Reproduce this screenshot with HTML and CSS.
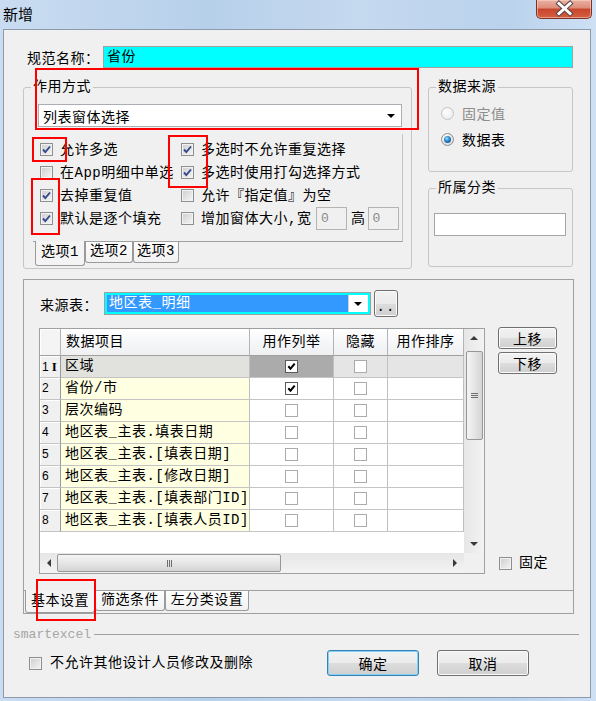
FILE: index.html
```html
<!DOCTYPE html>
<html lang="zh-CN">
<head>
  <meta charset="UTF-8">
  <title>新增</title>
  <link rel="stylesheet" href="styles.css">
</head>
<body>
<div class="window">

  <div class="titlebar">
    <span class="title">新增</span>
    <span class="close">
      <svg width="56" height="18" viewBox="0 0 56 18">
        <path d="M23 3.5L34 13.5M34 3.5L23 13.5" stroke="#5a4848" stroke-width="5" stroke-linecap="square"/>
        <path d="M23 3.5L34 13.5M34 3.5L23 13.5" stroke="#fff" stroke-width="3" stroke-linecap="square"/>
      </svg>
    </span>
  </div>

  <div class="client">

    <div class="name-row">
      <span class="name-label">规范名称：</span>
      <div class="name-input">省份</div>
    </div>

    <div class="top">
      <div class="group mode">
        <div class="group-title">作用方式</div>
        <div class="combo">列表窗体选择<span class="arrow"></span></div>

        <div class="opt-page">
          <div class="checks">
            <div class="chk"><span class="cb"><svg viewBox="0 0 11 11"><path d="M2 5.5l2.3 2.6L9 2.5"/></svg></span>允许多选</div>
            <div class="chk"><span class="cb"><svg viewBox="0 0 11 11"><path d="M2 5.5l2.3 2.6L9 2.5"/></svg></span>多选时不允许重复选择</div>
            <div class="chk"><span class="cb"></span>在App明细中单选</div>
            <div class="chk"><span class="cb"><svg viewBox="0 0 11 11"><path d="M2 5.5l2.3 2.6L9 2.5"/></svg></span>多选时使用打勾选择方式</div>
            <div class="chk"><span class="cb"><svg viewBox="0 0 11 11"><path d="M2 5.5l2.3 2.6L9 2.5"/></svg></span>去掉重复值</div>
            <div class="chk"><span class="cb"></span>允许『指定值』为空</div>
            <div class="chk"><span class="cb"><svg viewBox="0 0 11 11"><path d="M2 5.5l2.3 2.6L9 2.5"/></svg></span>默认是逐个填充</div>
            <div class="chk">
              <span class="cb"></span><span class="size-label">增加窗体大小,宽</span>
              <span class="num">0</span><span class="high">高</span><span class="num">0</span>
            </div>
          </div>
        </div>
        <div class="tabs small">
          <span class="tab active t1">选项1</span>
          <span class="tab t2">选项2</span>
          <span class="tab t3">选项3</span>
        </div>
      </div>

      <div class="side">
        <div class="group source">
          <div class="group-title">数据来源</div>
          <div class="radios">
            <div class="radio disabled"><span class="rb off"></span>固定值</div>
            <div class="radio"><span class="rb on"></span>数据表</div>
          </div>
        </div>
        <div class="group category">
          <div class="group-title">所属分类</div>
          <div class="cat-input"></div>
        </div>
      </div>
    </div>

    <div class="panel">
      <div class="page">
        <div class="src-row">
          <span class="src-label">来源表：</span>
          <div class="src-combo">
            <span class="src-val">地区表_明细</span>
            <span class="src-btn"><span class="arrow"></span></span>
          </div>
          <span class="btn dots">..</span>
        </div>

        <div class="grid-row">
          <div class="grid">
            <div class="view">
              <div class="tr head">
                <div class="c ind"></div>
                <div class="c item">数据项目</div>
                <div class="c list">用作列举</div>
                <div class="c hide">隐藏</div>
                <div class="c sort">用作排序</div>
              </div>
              <div class="tr cur">
                <div class="c ind">1<span class="ibeam">I</span></div>
                <div class="c item">区域</div>
                <div class="c list"><span class="gcb on"><svg viewBox="0 0 11 11"><path d="M2.3 5.3l2.2 2.4 4.2-5"/></svg></span></div>
                <div class="c hide"><span class="gcb"></span></div>
                <div class="c sort"></div>
              </div>
              <div class="tr">
                <div class="c ind">2</div>
                <div class="c item">省份/市</div>
                <div class="c list"><span class="gcb on"><svg viewBox="0 0 11 11"><path d="M2.3 5.3l2.2 2.4 4.2-5"/></svg></span></div>
                <div class="c hide"><span class="gcb"></span></div>
                <div class="c sort"></div>
              </div>
              <div class="tr">
                <div class="c ind">3</div>
                <div class="c item">层次编码</div>
                <div class="c list"><span class="gcb"></span></div>
                <div class="c hide"><span class="gcb"></span></div>
                <div class="c sort"></div>
              </div>
              <div class="tr">
                <div class="c ind">4</div>
                <div class="c item">地区表_主表.填表日期</div>
                <div class="c list"><span class="gcb"></span></div>
                <div class="c hide"><span class="gcb"></span></div>
                <div class="c sort"></div>
              </div>
              <div class="tr">
                <div class="c ind">5</div>
                <div class="c item">地区表_主表.[填表日期]</div>
                <div class="c list"><span class="gcb"></span></div>
                <div class="c hide"><span class="gcb"></span></div>
                <div class="c sort"></div>
              </div>
              <div class="tr">
                <div class="c ind">6</div>
                <div class="c item">地区表_主表.[修改日期]</div>
                <div class="c list"><span class="gcb"></span></div>
                <div class="c hide"><span class="gcb"></span></div>
                <div class="c sort"></div>
              </div>
              <div class="tr">
                <div class="c ind">7</div>
                <div class="c item">地区表_主表.[填表部门ID]</div>
                <div class="c list"><span class="gcb"></span></div>
                <div class="c hide"><span class="gcb"></span></div>
                <div class="c sort"></div>
              </div>
              <div class="tr">
                <div class="c ind">8</div>
                <div class="c item">地区表_主表.[填表人员ID]</div>
                <div class="c list"><span class="gcb"></span></div>
                <div class="c hide"><span class="gcb"></span></div>
                <div class="c sort"></div>
              </div>
            </div>

            <div class="vscroll">
              <span class="sarrow up"></span>
              <span class="vthumb"><span class="grip-h"></span></span>
              <span class="sarrow down"></span>
            </div>
            <div class="hscroll">
              <span class="sarrow left"></span>
              <span class="hthumb"><span class="grip-v"></span></span>
              <span class="sarrow right"></span>
            </div>
            <div class="corner"></div>
          </div>

          <div class="grid-side">
            <span class="btn move">上移</span>
            <span class="btn move down-btn">下移</span>
            <div class="chk fix"><span class="cb"></span>固定</div>
          </div>
        </div>
      </div>
      <div class="tabs big">
        <span class="tab active b1">基本设置</span>
        <span class="tab b2">筛选条件</span>
        <span class="tab b3">左分类设置</span>
      </div>
    </div>

    <div class="sep"><span class="sep-text">smartexcel</span><span class="sep-line"></span></div>

    <div class="footer">
      <div class="chk"><span class="cb"></span>不允许其他设计人员修改及删除</div>
      <div class="footer-buttons">
        <span class="btn big-btn default">确定</span>
        <span class="btn big-btn">取消</span>
      </div>
    </div>
  </div>

  <!-- red annotation boxes -->
  <div class="mark m1"></div>
  <div class="mark m2"></div>
  <div class="mark m3"></div>
  <div class="mark m4"></div>
  <div class="mark m5"></div>
</div>
</body>
</html>
```

FILE: styles.css
```css
* {
  box-sizing: border-box;
}

body {
  margin: 0;
  font-family: "Liberation Mono", "Noto Sans CJK SC", monospace;
  font-size: 14px;
  letter-spacing: 0.5px;
  color: #000;
  background: #c3d8ef;
}

.window {
  position: relative;
  width: 596px;
  height: 701px;
  overflow: hidden;
  background: linear-gradient(90deg, #c9dcf1 0%, #b7d0ea 35%, #c5d9ef 60%, #bad2ec 85%, #cde0f4 100%);
}

/* title bar */
.titlebar {
  display: flex;
  height: 29px;
}

.title {
  margin: 5px 0 0 3px;
  font-family: "Noto Sans CJK SC", sans-serif;
  font-size: 15px;
  line-height: 18px;
  letter-spacing: 0;
}

.close {
  margin-left: auto;
  margin-right: 4px;
  width: 56px;
  height: 19px;
  border: 1px solid #7a3326;
  border-top: none;
  border-radius: 0 0 5px 5px;
  background: linear-gradient(#eab1a3 0%, #dd8c79 45%, #c8452d 50%, #d4603f 100%);
  box-shadow: inset 0 0 0 1px rgba(255, 220, 210, 0.5);
}

.close svg {
  display: block;
  margin: 0 -1px;
}

/* client area */
.client {
  margin: 0 5px 0 3px;
  height: 669px;
  border: 1px solid #8c9aab;
  background: #f0f0f0;
}

.name-row {
  display: flex;
  align-items: center;
  height: 22px;
  margin-top: 16px;
  padding-left: 23px;
}

.name-label {
  width: 76px;
}

.name-input {
  width: 470px;
  height: 22px;
  padding-left: 3px;
  line-height: 20px;
  background: #00ffff;
  border: 1px solid #a0a0a0;
}

.top {
  display: flex;
  margin-top: 19px;
  padding-left: 19px;
}

.group {
  border: 1px solid #c6c6c6;
  border-radius: 3px;
}

.group-title {
  width: fit-content;
  height: 17px;
  margin: -9px 0 0 7px;
  padding: 0 2px;
  line-height: 17px;
  background: #f0f0f0;
}

.mode {
  width: 389px;
  height: 182px;
}

.combo {
  display: flex;
  align-items: center;
  width: 364px;
  height: 23px;
  margin: 8px 0 0 14px;
  padding-left: 4px;
  background: #fff;
  border: 1px solid #abadb3;
}

.arrow {
  margin-left: auto;
  margin-right: 6px;
  border-left: 4px solid transparent;
  border-right: 4px solid transparent;
  border-top: 4px solid #000;
}

.opt-page {
  width: 370px;
  height: 108px;
  margin: 7px 0 0 9px;
  padding-top: 4px;
  border-right: 1px solid #c4c4c4;
  border-bottom: 1px solid #a0a0a0;
}

.checks {
  display: grid;
  grid-template-columns: 141px auto;
  grid-auto-rows: 23px;
  padding-left: 7px;
}

.chk {
  display: flex;
  align-items: center;
  white-space: nowrap;
  line-height: 18px;
}

.cb {
  flex: none;
  width: 13px;
  height: 13px;
  margin-right: 7px;
  border: 1px solid #8e8f8f;
  background: linear-gradient(135deg, #cdcdcd, #f6f6f6);
  box-shadow: inset 0 0 0 1px #f2f2f2;
}

.cb svg {
  display: block;
  width: 11px;
  height: 11px;
  fill: none;
  stroke: #34488e;
  stroke-width: 1.9;
}

.size-label {
  width: 115px;
}

.num {
  width: 31px;
  height: 23px;
  padding-left: 4px;
  line-height: 21px;
  color: #8a8a8a;
  font-size: 13px;
  background: #f0f0f0;
  border: 1px solid #b4b4b4;
}

.high {
  margin: 0 2px 0 4px;
}

/* tabs */
.tabs {
  display: flex;
  padding-left: 2px;
}

.tab {
  height: 21px;
  line-height: 19px;
  text-align: center;
  background: linear-gradient(#fdfdfd, #f1f1f1);
  border: 1px solid #9a9a9a;
  border-top: none;
  border-radius: 0 0 3px 3px;
}

.tab.active {
  height: 25px;
  margin-top: -1px;
  background: #f4f4f4;
  line-height: 23px;
}

.t1 { width: 50px; }
.t2 { width: 48px; }
.t3 { width: 46px; }

.small {
  margin-left: 9px;
}

/* right side groups */
.side {
  margin-left: 16px;
  width: 145px;
}

.source {
  height: 85px;
}

.radios {
  display: flex;
  flex-direction: column;
  gap: 4px;
  margin: 6px 0 0 12px;
}

.radio {
  display: flex;
  align-items: center;
  height: 22px;
}

.radio.disabled {
  color: #8d8d8d;
}

.rb {
  display: flex;
  align-items: center;
  justify-content: center;
  width: 13px;
  height: 13px;
  margin-right: 8px;
  border-radius: 50%;
  border: 1px solid #8e8f8f;
  background: radial-gradient(circle at 40% 35%, #fff, #d4d4d4);
}

.rb.off {
  border-color: #c4c4c4;
  background: radial-gradient(circle at 40% 35%, #fff, #e8e8e8);
}

.rb.on::after {
  content: "";
  width: 7px;
  height: 7px;
  border-radius: 50%;
  background: radial-gradient(circle at 40% 35%, #a8e0ff 0, #2c8ad2 40%, #0b3d74 100%);
}

.category {
  height: 79px;
  margin-top: 16px;
}

.cat-input {
  width: 132px;
  height: 23px;
  margin: 16px 0 0 5px;
  background: #fff;
  border: 1px solid #a5a5a5;
}

/* bottom panel */
.panel {
  width: 551px;
  height: 335px;
  margin: 10px 0 0 19px;
  border: 1px solid #a0a0a0;
}

.page {
  height: 311px;
  padding-top: 10px;
  border-bottom: 1px solid #a0a0a0;
}

.src-row {
  display: flex;
  align-items: center;
  height: 27px;
  margin-left: 16px;
}

.src-label {
  width: 64px;
}

.src-combo {
  display: flex;
  width: 267px;
  height: 23px;
  padding: 2px;
  background: #00ffff;
  border: 1px solid #a0a0a0;
}

.src-val {
  flex: 1;
  padding-left: 2px;
  line-height: 17px;
  color: #fff;
  background: #3399ff;
}

.src-btn {
  display: flex;
  align-items: center;
  width: 20px;
  background: #fff;
  border-left: 1px solid #d0d0d0;
}

.src-btn .arrow {
  margin-right: 6px;
}

.btn {
  display: flex;
  align-items: center;
  justify-content: center;
  border: 1px solid #707070;
  border-radius: 3px;
  background: linear-gradient(#f2f2f2 0%, #ebebeb 50%, #dddddd 51%, #cfcfcf 100%);
  box-shadow: inset 0 0 0 1px #fbfbfb;
}

.dots {
  width: 24px;
  height: 27px;
  margin-left: 3px;
  padding-top: 6px;
  letter-spacing: 1px;
}

.grid-row {
  display: flex;
  margin: 11px 0 0 15px;
}

.grid {
  display: grid;
  grid-template-columns: 1fr 20px;
  grid-template-rows: 1fr 20px;
  width: 446px;
  height: 246px;
  border: 1px solid #a0a0a0;
  background: #fff;
}

.view {
  overflow: hidden;
}

.tr {
  display: flex;
  height: 22px;
}

.c {
  flex: none;
  height: 100%;
  border-right: 1px solid #c0c0c0;
  border-bottom: 1px solid #c4c4c4;
  line-height: 21px;
}

.ind {
  width: 21px;
  padding-left: 2px;
  font-family: "Liberation Sans", sans-serif;
  font-size: 12px;
  letter-spacing: 0;
  background: #f0f0f0;
  border-right-color: #999;
  box-shadow: inset 1px 1px #fff;
}

.ibeam {
  margin-left: 3px;
  font-family: "Liberation Serif", serif;
  font-weight: bold;
  font-size: 13px;
}

.item {
  width: 189px;
  padding-left: 4px;
  white-space: nowrap;
  background: #ffffe1;
}

.list { width: 84px; }
.hide { width: 54px; }
.sort { width: 76px; }

.list,
.hide {
  display: flex;
  align-items: center;
  justify-content: center;
}

.head {
  height: 27px;
}

.head .c {
  line-height: 26px;
  text-align: center;
  background: linear-gradient(#ffffff, #f6f7f9 50%, #eff0f2);
  border-right-color: #b4b4b4;
  border-bottom-color: #a0a0a0;
}

.head .item {
  padding-left: 5px;
  text-align: left;
}

.head .ind {
  background: #f4f4f4;
}

.cur .item { background: #e1e1dd; }
.cur .list { background: #ababab; }
.cur .hide,
.cur .sort { background: #e5e5e5; }

.gcb {
  width: 13px;
  height: 13px;
  background: #fff;
  border: 1px solid #ababab;
}

.gcb.on {
  border-color: #5a5a5a;
}

.gcb svg {
  display: block;
  width: 11px;
  height: 11px;
  fill: none;
  stroke: #000;
  stroke-width: 2;
}

/* scrollbars */
.vscroll {
  display: flex;
  flex-direction: column;
  align-items: center;
  background: linear-gradient(90deg, #e6e6e6, #f3f3f3);
}

.hscroll {
  display: flex;
  align-items: center;
  background: linear-gradient(#e6e6e6, #f3f3f3);
}

.corner {
  background: #f0f0f0;
}

.sarrow {
  flex: none;
  width: 0;
  height: 0;
}

.up {
  margin: 7px 0 5px;
  border-left: 4px solid transparent;
  border-right: 4px solid transparent;
  border-bottom: 4px solid #3a3a3a;
}

.down {
  margin: auto 0 7px;
  border-left: 4px solid transparent;
  border-right: 4px solid transparent;
  border-top: 4px solid #3a3a3a;
}

.left {
  margin: 0 6px 0 7px;
  border-top: 4px solid transparent;
  border-bottom: 4px solid transparent;
  border-right: 4px solid #3a3a3a;
}

.right {
  margin: 0 7px 0 auto;
  border-top: 4px solid transparent;
  border-bottom: 4px solid transparent;
  border-left: 4px solid #3a3a3a;
}

.vthumb,
.hthumb {
  display: flex;
  align-items: center;
  justify-content: center;
  border: 1px solid #979797;
  border-radius: 2px;
}

.vthumb {
  width: 17px;
  height: 89px;
  margin-top: 6px;
  background: linear-gradient(90deg, #f4f4f4, #e6e6e6 50%, #d4d4d4);
}

.hthumb {
  width: 224px;
  height: 18px;
  background: linear-gradient(#f4f4f4, #e6e6e6 50%, #d4d4d4);
}

.grip-h {
  width: 7px;
  height: 5px;
  border-top: 1px solid #6e6e6e;
  border-bottom: 1px solid #6e6e6e;
  background: linear-gradient(transparent 1px, #6e6e6e 1px, #6e6e6e 2px, transparent 2px);
}

.grip-v {
  width: 5px;
  height: 7px;
  border-left: 1px solid #6e6e6e;
  border-right: 1px solid #6e6e6e;
  background: linear-gradient(90deg, transparent 1px, #6e6e6e 1px, #6e6e6e 2px, transparent 2px);
}

.grid-side {
  display: flex;
  flex-direction: column;
  height: 246px;
  margin-left: 13px;
}

.move {
  width: 59px;
  height: 22px;
  margin-top: -1px;
}

.down-btn {
  margin-top: 3px;
}

.fix {
  height: 18px;
  margin: auto 0 2px 1px;
}

.big {
  padding-left: 1px;
}

.b1 { width: 70px; }
.b2 { width: 70px; height: 20px; }
.b3 { width: 84px; height: 20px; }

.big .tab.active {
  height: 23px;
}

/* separator + footer */
.sep {
  display: flex;
  align-items: center;
  height: 16px;
  margin: 12px 11px 0 9px;
}

.sep-text {
  font-family: "Liberation Mono", monospace;
  font-size: 13px;
  letter-spacing: 0;
  color: #a6a6a6;
}

.sep-line {
  flex: 1;
  height: 1px;
  margin-left: 3px;
  background: #a0a0a0;
}

.footer {
  display: flex;
  align-items: center;
  height: 26px;
  margin-top: 8px;
  padding-left: 25px;
}

.footer .cb {
  margin-right: 8px;
}

.footer-buttons {
  display: flex;
  gap: 18px;
  margin-left: auto;
  margin-right: 61px;
}

.big-btn {
  width: 92px;
  height: 26px;
}

.default {
  border-color: #3c7fb1;
  box-shadow: inset 0 0 0 1px #7fd3f6;
}

/* red annotation boxes */
.mark {
  position: absolute;
  border: 2px solid #ff0000;
}

.m1 { left: 35px; top: 68px; width: 384px; height: 62px; }
.m2 { left: 32px; top: 137px; width: 35px; height: 25px; }
.m3 { left: 168px; top: 135px; width: 40px; height: 53px; }
.m4 { left: 31px; top: 178px; width: 29px; height: 57px; }
.m5 { left: 36px; top: 579px; width: 60px; height: 42px; }
```
